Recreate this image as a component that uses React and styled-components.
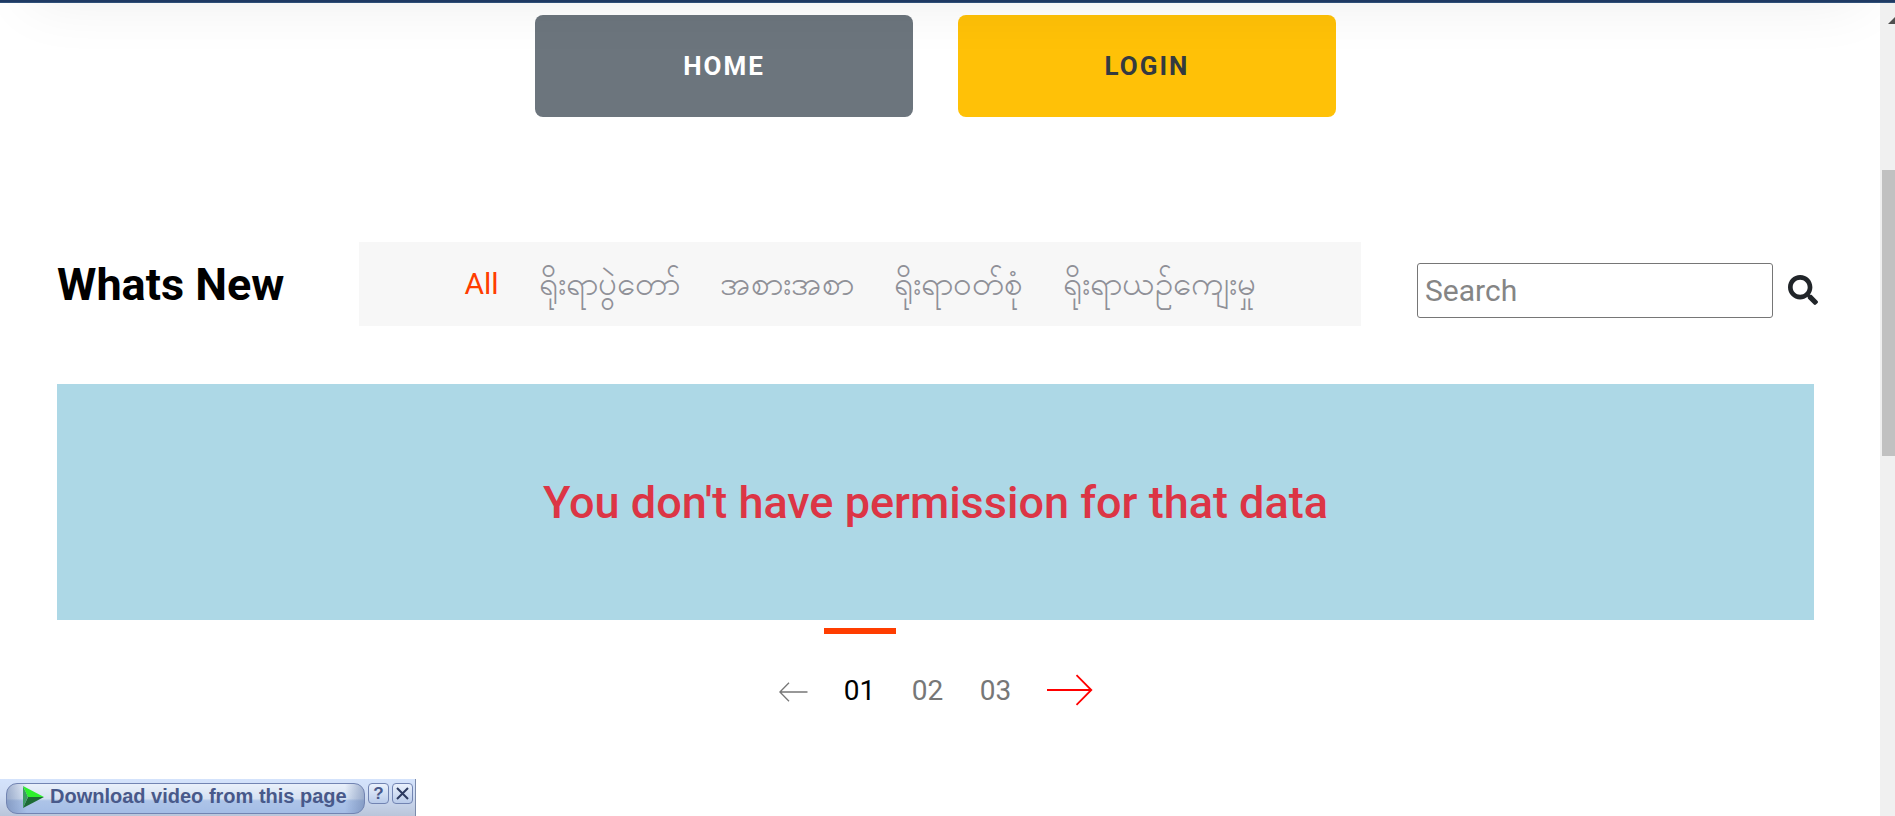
import React from "react";
import styled, { createGlobalStyle } from "styled-components";
import { FaSearch } from "react-icons/fa";

const GlobalStyle = createGlobalStyle`
  *, *::before, *::after { box-sizing: border-box; }
  body {
    margin: 0;
    background: #fff;
    color: #212529;
    font-family: Roboto, sans-serif;
    overflow: hidden;
  }
  h1, h2, p, ul { margin: 0; padding: 0; list-style: none; }
  button, input { font-family: inherit; }
  a { color: inherit; text-decoration: none; }
`;

const Page = styled.div`
  min-height: 100vh;
  display: flex;
  flex-direction: column;
  overflow: hidden;
`;

const Header = styled.header`
  position: relative;
  z-index: 1;
  flex: none;
  height: 163px;
  margin-top: -160px;
  background: #1f3a63;
  border-bottom: 1px solid #2f4f78;
  box-shadow: 0 30px 60px -30px rgba(0, 0, 0, 0.07);
  pointer-events: none;
`;

const Body = styled.div`
  flex: 1;
  display: grid;
  grid-template-columns: 1fr 15px;
`;

const Main = styled.main`
  padding: 12px 66px 0 57px;
`;

const Actions = styled.div`
  display: flex;
  justify-content: center;
  gap: 45px;
`;

const ActionButton = styled.button`
  width: 378px;
  height: 102px;
  border: 0;
  border-radius: 8px;
  background: ${(p) => (p.$warning ? "#ffc107" : "#6c757d")};
  color: ${(p) => (p.$warning ? "#343a40" : "#fff")};
  font-size: 26px;
  font-weight: 700;
  letter-spacing: 2px;
  text-transform: uppercase;
`;

const Toolbar = styled.div`
  display: grid;
  grid-template-columns: 302px 1fr auto;
  align-items: center;
  margin: 125px -4px 0 0;
`;

const Title = styled.h1`
  padding-top: 2px;
  color: #000;
  font-size: 45px;
  line-height: 54px;
  font-weight: 700;
`;

const Filters = styled.ul`
  display: flex;
  justify-content: center;
  align-items: center;
  gap: 40px;
  height: 84px;
  background: #f7f7f7;
`;

const FilterLink = styled.a`
  display: block;
  color: ${(p) => (p.$active ? "#ff3d00" : "#8f9097")};
  font-family: Roboto;
  font-size: ${(p) => (p.$active ? "30px" : "33px")};
  line-height: 44px;
  white-space: nowrap;
`;

const SearchForm = styled.form`
  display: flex;
  align-items: center;
  gap: 15px;
  padding: 13px 0 0 56px;
`;

const SearchInput = styled.input`
  width: 356px;
  height: 55px;
  padding: 0 7px;
  border: 1px solid #767676;
  border-radius: 3px;
  background: #fff;
  font-size: 30px;
  &::placeholder { color: #858585; opacity: 1; }
`;

const SearchButton = styled.button`
  display: flex;
  padding: 0 0 2px;
  border: 0;
  background: none;
  color: #212529;
  font-size: 30px;
`;

const Notice = styled.section`
  display: flex;
  align-items: center;
  justify-content: center;
  height: 236px;
  margin-top: 58px;
  background: #add8e6;
`;

const NoticeText = styled.h2`
  padding-top: 2px;
  color: #dc3545;
  font-size: 45px;
  line-height: 54px;
  font-weight: 500;
`;

const Pager = styled.nav`
  display: flex;
  justify-content: center;
  margin-top: 8px;
`;

const PageLink = styled.a`
  display: flex;
  flex-direction: column;
  align-items: center;
  width: 68px;
  color: ${(p) => (p.$active ? "#000" : "#777")};
  font-size: 28px;
  line-height: 34px;
  &::before {
    content: "";
    width: 72px;
    height: 6px;
    margin-bottom: 40px;
    background: ${(p) => (p.$active ? "#ff3d00" : "transparent")};
  }
`;

const ArrowLink = styled.a`
  display: flex;
  align-items: center;
  height: 34px;
  margin: ${(p) => (p.$next ? "45px 0 0 17px" : "47px 18px 0 0")};
  svg { display: block; fill: none; stroke: ${(p) => (p.$next ? "#f00" : "#777")}; }
`;

const Scrollbar = styled.div`
  position: relative;
  z-index: 2;
  padding-left: 2px;
  overflow: hidden;
  background: #f0f0f0;
`;

const ScrollArrow = styled.svg`
  display: block;
  margin: 14px 0 146px 6px;
  fill: #505050;
`;

const ScrollThumb = styled.div`
  height: 286px;
  background: #c1c1c1;
`;

const DownloadBar = styled.div`
  position: fixed;
  left: 0;
  bottom: 0;
  z-index: 3;
  display: flex;
  align-items: flex-start;
  gap: 3px;
  width: 416px;
  height: 37px;
  padding: 4px 2px 0 6px;
  border-right: 1px solid #7c8bab;
  background: linear-gradient(#d4e3fc, #cfdcf3 45%, #b9c5da);
`;

const DownloadButton = styled.button`
  display: flex;
  align-items: center;
  gap: 6px;
  width: 359px;
  height: 31px;
  padding: 0 0 4px 16px;
  border: 1px solid #7284b2;
  border-radius: 11px;
  background:
    linear-gradient(90deg, rgba(104, 126, 170, 0.55), transparent 20px, transparent 338px, rgba(104, 126, 170, 0.55)),
    linear-gradient(#e9f0fa, #d5e1f2 50%, #adc4e8 58%, #a4bde6);
  color: #48598a;
  font-family: "Liberation Sans", Arial, sans-serif;
  font-size: 20px;
  font-weight: 700;
  white-space: nowrap;
  svg { flex: none; }
`;

const SmallButton = styled.button`
  display: flex;
  align-items: center;
  justify-content: center;
  width: 21px;
  height: 21px;
  padding: 0;
  border: 1px solid #7284b2;
  border-radius: 4px;
  background: linear-gradient(#eaf1fc, #b9cbea);
  color: #48598a;
  font-family: "Liberation Sans", Arial, sans-serif;
  font-size: 17px;
  font-weight: 700;
`;

const filters = ["All", "ရိုးရာပွဲတော်", "အစားအစာ", "ရိုးရာဝတ်စုံ", "ရိုးရာယဉ်ကျေးမှု"];
const pages = ["01", "02", "03"];

export default function App() {
  return (
    <Page>
      <GlobalStyle />
      <Header />
      <Body>
        <Main>
          <Actions>
            <ActionButton type="button">Home</ActionButton>
            <ActionButton type="button" $warning>Login</ActionButton>
          </Actions>

          <Toolbar>
            <Title>Whats New</Title>
            <Filters>
              {filters.map((name, i) => (
                <li key={name}>
                  <FilterLink href="#" $active={i === 0}>{name}</FilterLink>
                </li>
              ))}
            </Filters>
            <SearchForm role="search">
              <SearchInput type="text" placeholder="Search" aria-label="Search" />
              <SearchButton type="button" aria-label="Submit search">
                <FaSearch />
              </SearchButton>
            </SearchForm>
          </Toolbar>

          <Notice>
            <NoticeText>You don't have permission for that data</NoticeText>
          </Notice>

          <Pager aria-label="Pages">
            <ArrowLink href="#" aria-label="Previous page">
              <svg width="29" height="20" viewBox="0 0 29 20" strokeWidth="1.3">
                <path d="M28.5 10H1M10 .8L.9 10l9.1 9.2" />
              </svg>
            </ArrowLink>
            {pages.map((n, i) => (
              <PageLink key={n} href="#" $active={i === 0}>{n}</PageLink>
            ))}
            <ArrowLink href="#" $next aria-label="Next page">
              <svg width="46" height="32" viewBox="0 0 46 32" strokeWidth="1.8">
                <path d="M0 16h44.500M29.500 1.200L44.300 16 29.500 30.800" />
              </svg>
            </ArrowLink>
          </Pager>
        </Main>
        <Scrollbar aria-hidden="true">
          <ScrollArrow width="14" height="7" viewBox="0 0 14 7">
            <path d="M0 7L7 0l7 7z" />
          </ScrollArrow>
          <ScrollThumb />
        </Scrollbar>
      </Body>

      <DownloadBar>
        <DownloadButton type="button">
          <svg width="21" height="22" viewBox="0 0 21 22">
            <path d="M0 0l5 10.500L0 22z" fill="#3c9a63" />
            <path d="M0 0l21 11H5z" fill="#2df02d" />
            <path d="M0 22l5-11h16z" fill="#1d6b35" />
          </svg>
          Download video from this page
        </DownloadButton>
        <SmallButton type="button">?</SmallButton>
        <SmallButton type="button" aria-label="Close">
          <svg width="15" height="15" viewBox="0 0 15 15" stroke="#2c3a60" strokeWidth="2">
            <path d="M2 2l11 11M13 2L2 13" />
          </svg>
        </SmallButton>
      </DownloadBar>
    </Page>
  );
}
